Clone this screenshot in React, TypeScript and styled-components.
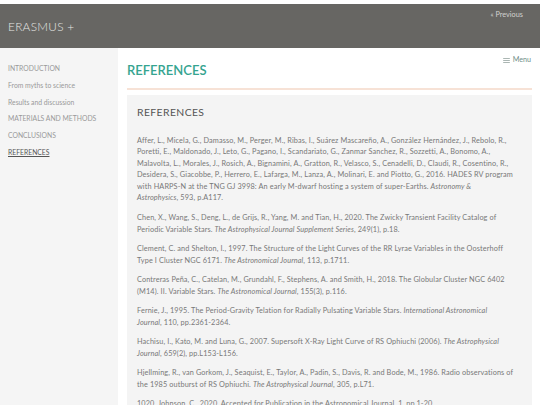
import styled, { createGlobalStyle } from "styled-components"

const GlobalStyle = createGlobalStyle`
    html, body {
        margin: 0;
        padding: 0;
        background: #ffffff;
    }
    body {
        font-family: Lato, "Noto Sans", sans-serif;
        color: #777;
    }
`

const navItems = [
    { label: "INTRODUCTION" },
    { label: "From myths to science" },
    { label: "Results and discussion" },
    { label: "MATERIALS AND METHODS" },
    { label: "CONCLUSIONS" },
    { label: "REFERENCES", active: true },
]

const App = () => {
    return (
        <Page>
            <GlobalStyle />
            <Header>
                <Brand>ERASMUS +</Brand>
                <PrevLink href="#">« Previous</PrevLink>
            </Header>
            <Body>
                <Sidebar>
                    {navItems.map((item) => (
                        <NavLink key={item.label} href="#" $active={item.active}>
                            {item.label}
                        </NavLink>
                    ))}
                </Sidebar>
                <Main>
                    <TitleRow>
                        <PageTitle>REFERENCES</PageTitle>
                        <MenuButton>
                            <MenuIcon viewBox="0 0 8 6">
                                <rect x="0" y="0" width="8" height="1" />
                                <rect x="0" y="2.5" width="8" height="1" />
                                <rect x="0" y="5" width="8" height="1" />
                            </MenuIcon>
                            Menu
                        </MenuButton>
                    </TitleRow>
                    <Divider />
                    <Card>
                        <CardTitle>REFERENCES</CardTitle>
                        <Ref>
                            Affer, L., Micela, G., Damasso, M., Perger, M., Ribas, I., Suárez Mascareño, A., González Hernández, J., Rebolo, R.,
                            <br />
                            Poretti, E., Maldonado, J., Leto, G., Pagano, I., Scandariato, G., Zanmar Sanchez, R., Sozzetti, A., Bonomo, A.,
                            <br />
                            Malavolta, L., Morales, J., Rosich, A., Bignamini, A., Gratton, R., Velasco, S., Cenadelli, D., Claudi, R., Cosentino, R.,
                            <br />
                            Desidera, S., Giacobbe, P., Herrero, E., Lafarga, M., Lanza, A., Molinari, E. and Piotto, G., 2016. HADES RV program
                            <br />
                            with HARPS-N at the TNG GJ 3998: An early M-dwarf hosting a system of super-Earths. <em>Astronomy &amp;<br />Astrophysics</em>, 593, p.A117.
                        </Ref>
                        <Ref>
                            Chen, X., Wang, S., Deng, L., de Grijs, R., Yang, M. and Tian, H., 2020. The Zwicky Transient Facility Catalog of
                            <br />
                            Periodic Variable Stars. <em>The Astrophysical Journal Supplement Series</em>, 249(1), p.18.
                        </Ref>
                        <Ref>
                            Clement, C. and Shelton, I., 1997. The Structure of the Light Curves of the RR Lyrae Variables in the Oosterhoff
                            <br />
                            Type I Cluster NGC 6171. <em>The Astronomical Journal</em>, 113, p.1711.
                        </Ref>
                        <Ref>
                            Contreras Peña, C., Catelan, M., Grundahl, F., Stephens, A. and Smith, H., 2018. The Globular Cluster NGC 6402
                            <br />
                            (M14). II. Variable Stars. <em>The Astronomical Journal</em>, 155(3), p.116.
                        </Ref>
                        <Ref>
                            Fernie, J., 1995. The Period-Gravity Telation for Radially Pulsating Variable Stars. <em>International Astronomical<br />Journal</em>, 110, pp.2361-2364.
                        </Ref>
                        <Ref>
                            Hachisu, I., Kato, M. and Luna, G., 2007. Supersoft X-Ray Light Curve of RS Ophiuchi (2006). <em>The Astrophysical<br />Journal</em>, 659(2), pp.L153-L156.
                        </Ref>
                        <Ref>
                            Hjellming, R., van Gorkom, J., Seaquist, E., Taylor, A., Padin, S., Davis, R. and Bode, M., 1986. Radio observations of
                            <br />
                            the 1985 outburst of RS Ophiuchi. <em>The Astrophysical Journal</em>, 305, p.L71.
                        </Ref>
                        <Ref>
                            1020. Johnson, C., 2020. Accepted for Publication in the Astronomical Journal, 1, pp.1-20.
                        </Ref>
                    </Card>
                </Main>
            </Body>
        </Page>
    )
}

export default App

const Page = styled.div`
    width: 540px;
    height: 405px;
    overflow: hidden;
    padding-top: 4px;
    box-sizing: border-box;
    display: flex;
    flex-direction: column;
`
const Header = styled.header`
    height: 44px;
    flex-shrink: 0;
    background: #676663;
    display: flex;
    justify-content: space-between;
    align-items: flex-start;
    padding: 0 17px 0 8px;
`
const Brand = styled.div`
    margin-top: 16px;
    font-size: 11.8px;
    line-height: 14px;
    font-weight: 300;
    color: #e6e6e4;
    letter-spacing: 0.3px;
`
const PrevLink = styled.a`
    margin-top: 7px;
    font-size: 7.3px;
    line-height: 8px;
    color: #d2d2d0;
    text-decoration: none;
`
const Body = styled.div`
    flex: 1;
    display: grid;
    grid-template-columns: 118px 1fr;
    min-height: 0;
`
const Sidebar = styled.nav`
    background: #f5f5f5;
    padding: 12px 0 0 8px;
    display: flex;
    flex-direction: column;
`
const NavLink = styled.a<{ $active?: boolean }>`
    font-size: 6.8px;
    line-height: 16.75px;
    color: ${(p) => (p.$active ? "#555" : "#9a9a9a")};
    text-decoration: ${(p) => (p.$active ? "underline" : "none")};
    text-underline-offset: 1px;
    white-space: nowrap;
`
const Main = styled.main`
    padding: 7px 8px 0 9px;
    min-width: 0;
`
const TitleRow = styled.div`
    display: flex;
    justify-content: space-between;
    align-items: flex-start;
`
const PageTitle = styled.h1`
    margin: 7px 0 0 0;
    font-size: 13px;
    line-height: 16px;
    font-weight: 600;
    color: #35a490;
`
const MenuButton = styled.div`
    display: flex;
    align-items: center;
    gap: 3px;
    margin-right: 1px;
    font-size: 7.2px;
    line-height: 10px;
    color: #6f8f88;
`
const MenuIcon = styled.svg`
    width: 7px;
    height: 5px;
    fill: #9aa8a4;
`
const Divider = styled.div`
    margin-top: 10px;
    height: 1.5px;
    background: #f7e2d6;
`
const Card = styled.section`
    margin-top: 5px;
    background: #f4f4f4;
    padding: 11px 10px 10px 10px;
`
const CardTitle = styled.h2`
    margin: 0 0 17px 0;
    font-size: 10.4px;
    line-height: 12px;
    font-weight: 400;
    color: #555;
    letter-spacing: 0.4px;
`
const Ref = styled.p`
    margin: 0 0 7.9px 0;
    font-size: 7.3px;
    line-height: 11.6px;
    letter-spacing: 0.12px;
    color: #787878;
    white-space: nowrap;

    em {
        font-style: italic;
    }
`
